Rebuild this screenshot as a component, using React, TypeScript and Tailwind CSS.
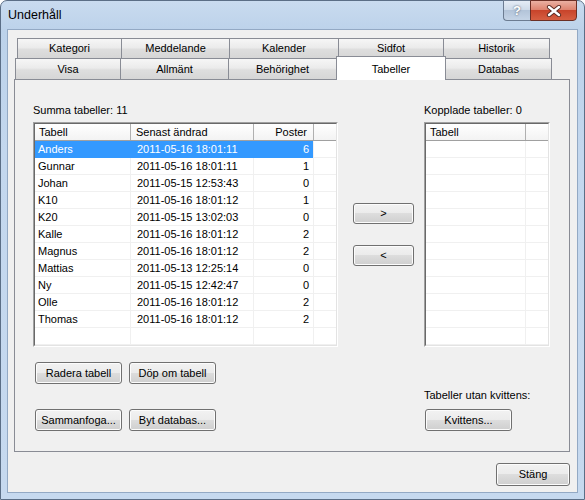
import React from "react"

const rows = [
  ["Anders", "2011-05-16 18:01:11", "6"],
  ["Gunnar", "2011-05-16 18:01:11", "1"],
  ["Johan", "2011-05-15 12:53:43", "0"],
  ["K10", "2011-05-16 18:01:12", "1"],
  ["K20", "2011-05-15 13:02:03", "0"],
  ["Kalle", "2011-05-16 18:01:12", "2"],
  ["Magnus", "2011-05-16 18:01:12", "2"],
  ["Mattias", "2011-05-13 12:25:14", "0"],
  ["Ny", "2011-05-15 12:42:47", "0"],
  ["Olle", "2011-05-16 18:01:12", "2"],
  ["Thomas", "2011-05-16 18:01:12", "2"],
]

const topTabs = [
  { label: "Kategori", w: "w-[104px]" },
  { label: "Meddelande", w: "w-[108px]" },
  { label: "Kalender", w: "w-[109px]" },
  { label: "Sidfot", w: "w-[105px]" },
  { label: "Historik", w: "w-[107px]" },
]

const bottomTabs = [
  { label: "Visa", w: "w-[105px]" },
  { label: "Allmänt", w: "w-[108px]" },
  { label: "Behörighet", w: "w-[108px]" },
  { label: "Tabeller", w: "w-[110px]", active: true },
  { label: "Databas", w: "w-[106px]" },
]

const tabBg =
  "bg-[linear-gradient(#f6f6f6_0%,#ebebeb_45%,#dedede_55%,#d6d6d6_100%)]"

function Btn({ className, children }: { className: string; children: React.ReactNode }) {
  return (
    <button
      className={`flex items-center justify-center rounded-[3px] border border-[#707070] bg-[linear-gradient(#f2f2f2_0%,#ebebeb_50%,#dddddd_50%,#cfcfcf_100%)] text-[11px] leading-none text-black shadow-[inset_0_0_0_1px_#fcfcfc] ${className}`}
    >
      {children}
    </button>
  )
}

function ListBox({ className, children }: { className: string; children: React.ReactNode }) {
  return (
    <div
      className={`flex border border-t-[#a0a0a0] border-l-[#a0a0a0] border-r-white border-b-white ${className}`}
    >
      <div className="flex flex-1 flex-col overflow-hidden border border-t-[#696969] border-l-[#696969] border-r-[#e3e3e3] border-b-[#e3e3e3] bg-white">
        {children}
      </div>
    </div>
  )
}

function CloseIcon() {
  return (
    <svg width="16" height="12" viewBox="0 0 16 12">
      <path d="M3 2 L13 10 M13 2 L3 10" stroke="#5a2a22" strokeWidth="4.2" strokeLinecap="round" />
      <path d="M3 2 L13 10 M13 2 L3 10" stroke="#ffffff" strokeWidth="2.4" strokeLinecap="round" />
    </svg>
  )
}

export default function App() {
  return (
    <div className="h-[500px] w-[585px] bg-white font-['Liberation_Sans',Arial,sans-serif] text-black">
      <div className="flex h-[500px] w-[585px] flex-col rounded-t-[7px] border border-[#5b6e86] bg-[linear-gradient(180deg,#c9dbef_0%,#bcd2ea_6%,#c3d7ee_30%,#c6d9ef_100%)] px-[7px]">
        {/* title bar */}
        <div className="flex h-[29px] items-start">
          <div className="pt-[7px] text-[12.5px] leading-[15px]">Underhåll</div>
          <div className="flex-1" />
          <div className="-mt-px flex h-[21px]">
            <div className="flex w-[27px] items-center justify-center rounded-bl-[4px] border border-r-0 border-[#6c7c91] bg-[linear-gradient(#e4ecf6_0%,#cfdbe9_45%,#b3c4d9_50%,#c5d4e6_100%)] text-[13px] font-bold text-white [text-shadow:0_0_2px_#3b4a5e]">
              ?
            </div>
            <div className="flex w-[47px] items-center justify-center rounded-br-[4px] border border-[#6b2f25] bg-[linear-gradient(#eab0a2_0%,#de8470_45%,#c8442b_50%,#d65f42_100%)]">
              <CloseIcon />
            </div>
          </div>
        </div>

        {/* client area */}
        <div className="flex h-[462px] flex-col bg-[#f0f0f0] outline outline-1 outline-[#93a9c4]">
          <div className="ml-[6px] pt-[8px]">
            {/* tab row 1 */}
            <div className="ml-[3px] flex h-[20px]">
              {topTabs.map((t, i) => (
                <div
                  key={t.label}
                  className={`flex items-center justify-center border-t border-l border-[#898c95] text-[11px] ${tabBg} ${t.w} ${
                    i === topTabs.length - 1 ? "border-r" : ""
                  }`}
                >
                  {t.label}
                </div>
              ))}
            </div>
            {/* tab row 2 */}
            <div className="ml-px flex h-[21px] items-end">
              {bottomTabs.map((t, i) =>
                t.active ? (
                  <div
                    key={t.label}
                    className={`relative z-10 -mb-px flex h-[24px] items-start justify-center border-x border-t border-[#898c95] bg-white pt-[4px] text-[11px] ${t.w}`}
                  >
                    {t.label}
                  </div>
                ) : (
                  <div
                    key={t.label}
                    className={`flex h-[21px] items-center justify-center border-t border-[#898c95] text-[11px] ${tabBg} ${t.w} ${
                      i === bottomTabs.length - 1 ? "border-r" : ""
                    } ${i === 0 || i === 1 || i === 2 ? "border-l" : ""}`}
                  >
                    {t.label}
                  </div>
                )
              )}
            </div>

            {/* panel */}
            <div className="flex h-[373px] w-[556px] flex-col border border-[#898c95] bg-[#f0f0f0] pl-[18px] pt-[24px]">
              <div className="flex">
                {/* left list */}
                <div className="flex flex-col">
                  <div className="h-[13px] text-[11px] leading-[13px]">Summa tabeller: 11</div>
                  <ListBox className="mt-[5px] h-[225px] w-[305px]">
                    <div className="flex h-[17px] shrink-0 border-b border-[#a0a0a0] bg-[linear-gradient(#ffffff,#f3f3f3)] text-[11px]">
                      <div className="flex w-[96px] items-center border-r border-[#b0b0b0] pl-[4px]">Tabell</div>
                      <div className="flex w-[123px] items-center border-r border-[#b0b0b0] pl-[5px]">Senast ändrad</div>
                      <div className="flex w-[60px] items-center justify-end border-r border-[#b0b0b0] pr-[6px]">Poster</div>
                      <div className="flex-1" />
                    </div>
                    {rows.map((r, i) => {
                      const sel = i === 0
                      return (
                        <div key={r[0]} className="flex h-[17px] shrink-0 text-[11px]">
                          <div
                            className={`flex w-[279px] ${
                              sel ? "bg-[#3399ff] text-white" : "border-b border-[#f0f0f0]"
                            }`}
                          >
                            <div className={`flex w-[96px] items-center pl-[3px] ${sel ? "" : "border-r border-[#f0f0f0]"}`}>{r[0]}</div>
                            <div className={`flex w-[123px] items-center pl-[6px] ${sel ? "" : "border-r border-[#f0f0f0]"}`}>{r[1]}</div>
                            <div className="flex w-[60px] items-center justify-end border-r border-[#f0f0f0] pr-[4px]">{r[2]}</div>
                          </div>
                          <div className="flex-1 border-b border-[#f0f0f0]" />
                        </div>
                      )
                    })}
                    {[0, 1].map((k) => (
                      <div key={k} className="flex h-[17px] shrink-0 border-b border-[#f0f0f0]">
                        <div className="w-[96px] border-r border-[#f0f0f0]" />
                        <div className="w-[123px] border-r border-[#f0f0f0]" />
                        <div className="w-[60px] border-r border-[#f0f0f0]" />
                      </div>
                    ))}
                  </ListBox>
                </div>

                {/* arrow buttons */}
                <div className="ml-[15px] flex flex-col pt-[99px]">
                  <Btn className="h-[21px] w-[61px]">&gt;</Btn>
                  <Btn className="mt-[21px] h-[21px] w-[61px]">&lt;</Btn>
                </div>

                {/* right list */}
                <div className="ml-[10px] flex flex-col">
                  <div className="h-[13px] text-[11px] leading-[13px]">Kopplade tabeller: 0</div>
                  <ListBox className="mt-[5px] h-[225px] w-[126px]">
                    <div className="flex h-[17px] shrink-0 border-b border-[#a0a0a0] bg-[linear-gradient(#ffffff,#f3f3f3)] text-[11px]">
                      <div className="flex w-[100px] items-center border-r border-[#b0b0b0] pl-[4px]">Tabell</div>
                      <div className="flex-1" />
                    </div>
                    {Array.from({ length: 12 }).map((_, k) => (
                      <div key={k} className="flex h-[17px] shrink-0 border-b border-[#f0f0f0]">
                        <div className="w-[100px] border-r border-[#f0f0f0]" />
                      </div>
                    ))}
                  </ListBox>
                </div>
              </div>

              {/* bottom buttons */}
              <div className="flex">
                <div className="flex w-[391px] flex-col pl-[2px] pt-[15px]">
                  <div className="flex gap-[7px]">
                    <Btn className="h-[22px] w-[87px]">Radera tabell</Btn>
                    <Btn className="h-[22px] w-[87px]">Döp om tabell</Btn>
                  </div>
                  <div className="mt-[25px] flex gap-[7px]">
                    <Btn className="h-[22px] w-[87px]">Sammanfoga...</Btn>
                    <Btn className="h-[22px] w-[87px]">Byt databas...</Btn>
                  </div>
                </div>
                <div className="flex flex-col justify-end">
                  <div className="text-[11px] leading-[13px]">Tabeller utan kvittens:</div>
                  <Btn className="ml-px mt-[7px] h-[22px] w-[87px]">Kvittens...</Btn>
                </div>
              </div>
            </div>
          </div>

          {/* footer */}
          <div className="mt-[11px] flex justify-end pr-[7px]">
            <Btn className="h-[23px] w-[74px]">Stäng</Btn>
          </div>
        </div>
      </div>
    </div>
  )
}
